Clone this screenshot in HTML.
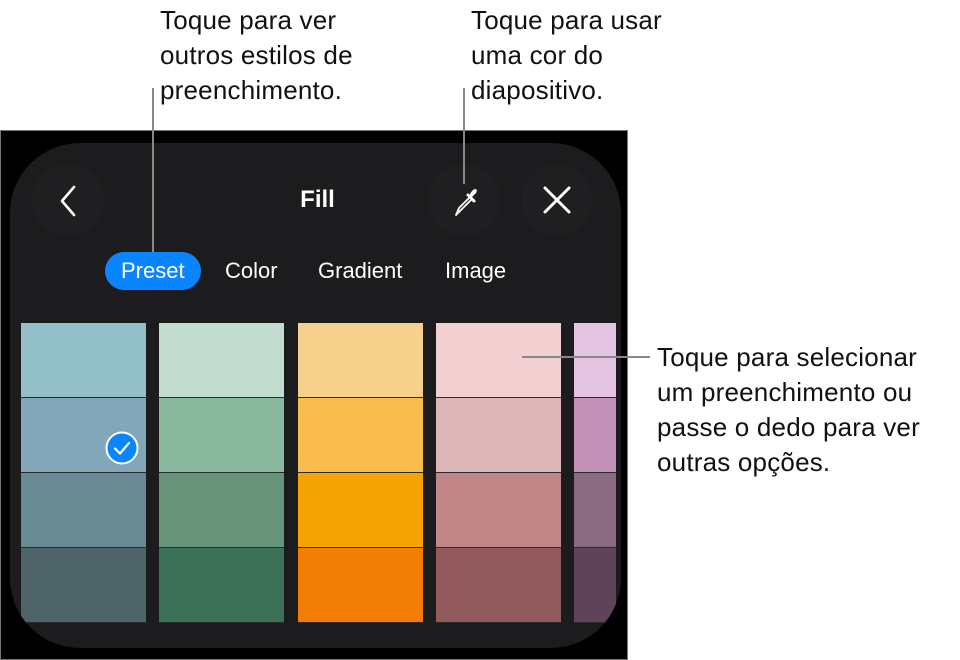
<!DOCTYPE html>
<html><head><meta charset="utf-8"><style>
body{margin:0;width:960px;height:660px;background:#fff;position:relative;overflow:hidden;font-family:"Liberation Sans",sans-serif}
.t{position:absolute;font-size:26px;line-height:35px;color:#111;letter-spacing:0.2px;white-space:nowrap}
.frame{position:absolute;left:0;top:130px;width:626px;height:528px;background:#000;border:1px solid #777}
.panel{position:absolute;left:10px;top:143px;width:611px;height:505px;background:#1c1c1e;border-radius:70px;overflow:hidden}
.circ{position:absolute;width:72px;height:72px;border-radius:50%;background:#1f1f21}
.col{position:absolute;top:180px;width:125px}
.col div{height:74px;border-bottom:1px solid #2a2a2a}
.tab{position:absolute;top:110px;color:#fff;font-size:22px;line-height:36px}
.line{position:absolute;background:#888}
</style></head><body>
<div class="t" style="left:160px;top:3px">Toque para ver<br>outros estilos de<br>preenchimento.</div>
<div class="t" style="left:471px;top:3px">Toque para usar<br>uma cor do<br>diapositivo.</div>
<div class="t" style="left:657px;top:340px">Toque para selecionar<br>um preenchimento ou<br>passe o dedo para ver<br>outras opções.</div>
<div class="frame"></div>
<div class="panel">
 <div class="circ" style="left:22px;top:21px"></div>
 <div class="circ" style="left:418px;top:21px"></div>
 <div class="circ" style="left:511px;top:21px"></div>
 <svg style="position:absolute;left:46px;top:40px" width="24" height="36"><path d="M18 4 L6 18 L18 32" stroke="#fff" stroke-width="2.6" fill="none" stroke-linecap="round" stroke-linejoin="round"/></svg>
 <div style="position:absolute;left:0;width:611px;top:40px;text-align:center;color:#fff;font-size:24px;font-weight:bold;line-height:34px;padding-left:2px">Fill</div>
 <svg style="position:absolute;left:438px;top:41px" width="36" height="36"><path d="M8 31 L11 24 L22 13 L24 15 L13 26 Z" stroke="#fff" stroke-width="1.8" fill="none" stroke-linejoin="round"/><path d="M20 11 L26 17" stroke="#fff" stroke-width="3" stroke-linecap="round"/><path d="M23 14 L28 9 Q30 5 27 5 Q25 5 22 10Z" fill="#fff"/></svg>
 <svg style="position:absolute;left:530px;top:40px" width="34" height="34"><path d="M5 5 L29 29 M29 5 L5 29" stroke="#fff" stroke-width="3" stroke-linecap="round"/></svg>
 <div style="position:absolute;left:95px;top:109px;width:96px;height:38px;border-radius:19px;background:#0a84ff"></div>
 <div class="tab" style="left:111px">Preset</div>
 <div class="tab" style="left:215px">Color</div>
 <div class="tab" style="left:308px">Gradient</div>
 <div class="tab" style="left:435px">Image</div>
 <div class="col" style="left:11px"><div style="background:#93c0c8"></div><div style="background:#81a7b8"></div><div style="background:#678a93"></div><div style="background:#4e6469"></div></div>
 <div class="col" style="left:149px"><div style="background:#c2dccf"></div><div style="background:#8bb9a0"></div><div style="background:#68947c"></div><div style="background:#3c7157"></div></div>
 <div class="col" style="left:288px"><div style="background:#f6d18c"></div><div style="background:#f8bb4d"></div><div style="background:#f6a305"></div><div style="background:#f27e05"></div></div>
 <div class="col" style="left:426px"><div style="background:#f2d0d2"></div><div style="background:#dcb6b7"></div><div style="background:#c38688"></div><div style="background:#935a5d"></div></div>
 <div class="col" style="left:564px;width:42px"><div style="background:#e2c3e1"></div><div style="background:#c090b6"></div><div style="background:#8a6a80"></div><div style="background:#5e4458"></div></div>
 <svg style="position:absolute;left:95px;top:288px" width="34" height="34"><circle cx="17" cy="17" r="15.5" fill="#0a84ff" stroke="#fff" stroke-width="2"/><path d="M10 17.5 L15 22.5 L24 12" stroke="#fff" stroke-width="2.2" fill="none" stroke-linecap="round" stroke-linejoin="round"/></svg>
</div>
<div class="line" style="left:152px;top:88px;width:2px;height:164px"></div>
<div class="line" style="left:463px;top:88px;width:2px;height:96px"></div>
<div class="line" style="left:522px;top:356px;width:128px;height:2px"></div>
</body></html>
